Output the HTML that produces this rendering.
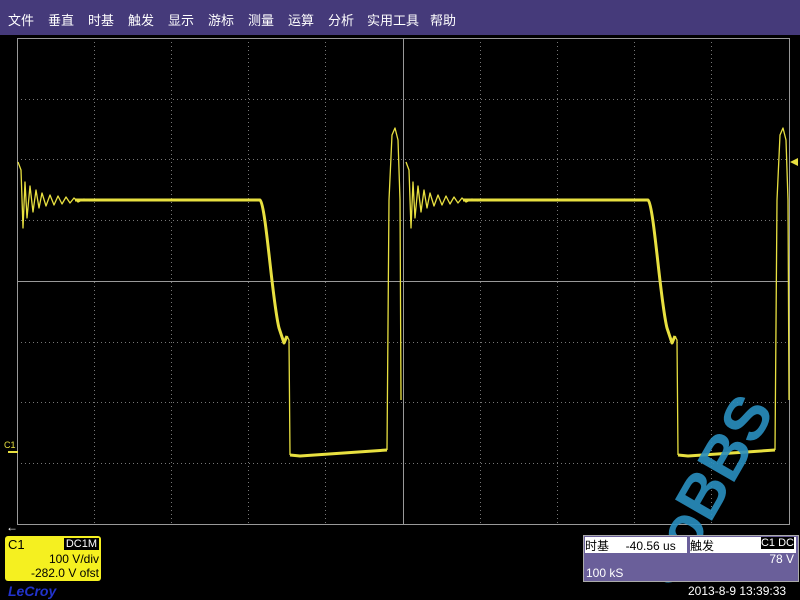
<!DOCTYPE html>
<html><head><meta charset="utf-8"><style>
body{margin:0;width:800px;height:600px;background:#000;overflow:hidden;position:relative;font-family:"Liberation Sans","Noto Sans CJK SC",sans-serif}
#menu{position:absolute;left:0;top:0;width:800px;height:35px;background:#453a7a;color:#fff;font-size:13px}
#menu span{position:absolute;top:10px}
.box{position:absolute;font-size:12px}
</style></head><body>
<div id="menu">
<span style="left:8px">文件</span><span style="left:48px">垂直</span><span style="left:88px">时基</span><span style="left:128px">触发</span><span style="left:168px">显示</span><span style="left:208px">游标</span><span style="left:248px">测量</span><span style="left:288px">运算</span><span style="left:328px">分析</span><span style="left:367px">实用工具</span><span style="left:430px">帮助</span>
</div>
<svg width="800" height="600" style="position:absolute;left:0;top:0">
<g stroke="#777" stroke-width="1" stroke-dasharray="1,3" fill="none">
<path d="M94.5,38V524M171.5,38V524M248.5,38V524M325.5,38V524M480.5,38V524M557.5,38V524M634.5,38V524M711.5,38V524"/>
<path d="M17,99.5H789M17,159.5H789M17,220.5H789M17,342.5H789M17,402.5H789M17,463.5H789"/>
</g>
<g stroke="#999" stroke-width="1" fill="none">
<rect x="17.5" y="38.5" width="772" height="486"/>
<path d="M17,281.5H789M403.5,38V524"/>
</g>
<g fill="none" stroke="#e8e040" stroke-linejoin="round">
<g id="w">
<path stroke-width="1.3" d="M18,162 L21,170 L23,228 L25,182 L27,218 L30,186 L33,212 L36,190 L39,208 L42,193 L46,206 L50,195 L54,205 L58,196 L62,204 L66,197 L70,203 L74,198 L78,202 L84,199 L90,201"/>
<path stroke-width="3" d="M75,200 L260,200 C266,205 272,300 279,328 L284,343 L287,336"/>
<path stroke-width="1.3" d="M287,336 L289,340 L290,455"/>
<path stroke-width="3" d="M290,455 L300,456 L387,450"/>
<path stroke-width="1.3" d="M387,450 L389,200 L392,135 L395,128 L398,140 L400,200 L401,400"/>
</g>
<use href="#w" x="388"/>
</g>
<path d="M790,162 L798,158 L798,166Z" fill="#e8e040"/>
<path d="M8,452H18" stroke="#e8e040" stroke-width="2"/>
<text x="4" y="448" fill="#e8e040" font-size="9" font-family="Liberation Sans">C1</text>
<text x="6" y="531" fill="#fff" font-size="12">←</text>
<text x="672" y="590" fill="#2a8fc0" font-size="62" font-family="Liberation Sans" font-weight="bold" transform="rotate(-60 672 590)" opacity="0.9">ooBBS</text>
</svg>
<div class="box" style="left:5px;top:536px;width:96px;height:45px;background:#f5f020;border-radius:3px;color:#000">
<div style="position:absolute;left:3px;top:1px;font-size:13px">C1</div>
<div style="position:absolute;right:2px;top:2px;background:#000;color:#fff;font-size:11px;padding:0 2px">DC1M</div>
<div style="position:absolute;right:2px;top:16px">100 V/div</div>
<div style="position:absolute;right:2px;top:30px">-282.0 V ofst</div>
</div>
<div class="box" style="left:8px;top:583px;color:#2233cc;font-size:14px;font-weight:bold;font-style:italic">LeCroy</div>
<div class="box" style="left:583px;top:535px;width:214px;height:45px;background:#6a5f9a;border:1px solid #aaa">
<div style="position:absolute;left:1px;top:1px;width:102px;height:16px;background:#fff;color:#000">时基 &nbsp; &nbsp; -40.56 us</div>
<div style="position:absolute;left:106px;top:1px;width:106px;height:16px;background:#fff;color:#000">触发<span style="position:absolute;right:2px;background:#000;color:#fff;font-size:11px">C1 DC</span></div>
<div style="position:absolute;left:2px;top:30px;color:#fff">100 kS</div>
<div style="position:absolute;right:4px;top:16px;color:#fff">78 V</div>
</div>
<div class="box" style="left:688px;top:584px;color:#fff;font-size:12px">2013-8-9 13:39:33</div>
</body></html>
